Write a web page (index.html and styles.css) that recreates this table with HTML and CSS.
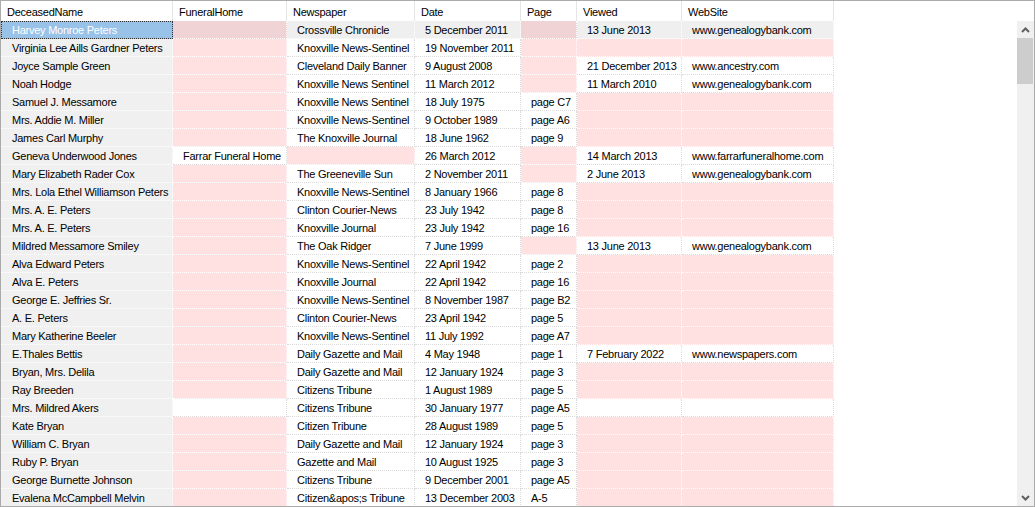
FILE: index.html
```html
<!DOCTYPE html>
<html>
<head>
<meta charset="utf-8">
<link rel="stylesheet" href="styles.css">
</head>
<body>
<div class="frame">
  <div class="head">
    <div class="hc">DeceasedName</div>
    <div class="hc">FuneralHome</div>
    <div class="hc">Newspaper</div>
    <div class="hc">Date</div>
    <div class="hc">Page</div>
    <div class="hc">Viewed</div>
    <div class="hc">WebSite</div>
    <div class="hfill"></div>
  </div>
  <div class="body">
    <div class="rows">
      <div class="row cur"><div class="c n sel">Harvey Monroe Peters</div><div class="c e"></div><div class="c w">Crossville Chronicle</div><div class="c w">5 December 2011</div><div class="c e"></div><div class="c w">13 June 2013</div><div class="c w">www.genealogybank.com</div></div>
      <div class="row"><div class="c n">Virginia Lee Aills Gardner Peters</div><div class="c e"></div><div class="c w">Knoxville News-Sentinel</div><div class="c w">19 November 2011</div><div class="c e"></div><div class="c e"></div><div class="c e"></div></div>
      <div class="row"><div class="c n">Joyce Sample Green</div><div class="c e"></div><div class="c w">Cleveland Daily Banner</div><div class="c w">9 August 2008</div><div class="c e"></div><div class="c w">21 December 2013</div><div class="c w">www.ancestry.com</div></div>
      <div class="row"><div class="c n">Noah Hodge</div><div class="c e"></div><div class="c w">Knoxville News Sentinel</div><div class="c w">11 March 2012</div><div class="c e"></div><div class="c w">11 March 2010</div><div class="c w">www.genealogybank.com</div></div>
      <div class="row"><div class="c n">Samuel J. Messamore</div><div class="c e"></div><div class="c w">Knoxville News Sentinel</div><div class="c w">18 July 1975</div><div class="c w">page C7</div><div class="c e"></div><div class="c e"></div></div>
      <div class="row"><div class="c n">Mrs. Addie M. Miller</div><div class="c e"></div><div class="c w">Knoxville News-Sentinel</div><div class="c w">9 October 1989</div><div class="c w">page A6</div><div class="c e"></div><div class="c e"></div></div>
      <div class="row"><div class="c n">James Carl Murphy</div><div class="c e"></div><div class="c w">The Knoxville Journal</div><div class="c w">18 June 1962</div><div class="c w">page 9</div><div class="c e"></div><div class="c e"></div></div>
      <div class="row"><div class="c n">Geneva Underwood Jones</div><div class="c w">Farrar Funeral Home</div><div class="c e"></div><div class="c w">26 March 2012</div><div class="c e"></div><div class="c w">14 March 2013</div><div class="c w">www.farrarfuneralhome.com</div></div>
      <div class="row"><div class="c n">Mary Elizabeth Rader Cox</div><div class="c e"></div><div class="c w">The Greeneville Sun</div><div class="c w">2 November 2011</div><div class="c e"></div><div class="c w">2 June 2013</div><div class="c w">www.genealogybank.com</div></div>
      <div class="row"><div class="c n">Mrs. Lola Ethel Williamson Peters</div><div class="c e"></div><div class="c w">Knoxville News-Sentinel</div><div class="c w">8 January 1966</div><div class="c w">page 8</div><div class="c e"></div><div class="c e"></div></div>
      <div class="row"><div class="c n">Mrs. A. E. Peters</div><div class="c e"></div><div class="c w">Clinton Courier-News</div><div class="c w">23 July 1942</div><div class="c w">page 8</div><div class="c e"></div><div class="c e"></div></div>
      <div class="row"><div class="c n">Mrs. A. E. Peters</div><div class="c e"></div><div class="c w">Knoxville Journal</div><div class="c w">23 July 1942</div><div class="c w">page 16</div><div class="c e"></div><div class="c e"></div></div>
      <div class="row"><div class="c n">Mildred Messamore Smiley</div><div class="c e"></div><div class="c w">The Oak Ridger</div><div class="c w">7 June 1999</div><div class="c e"></div><div class="c w">13 June 2013</div><div class="c w">www.genealogybank.com</div></div>
      <div class="row"><div class="c n">Alva Edward Peters</div><div class="c e"></div><div class="c w">Knoxville News-Sentinel</div><div class="c w">22 April 1942</div><div class="c w">page 2</div><div class="c e"></div><div class="c e"></div></div>
      <div class="row"><div class="c n">Alva E. Peters</div><div class="c e"></div><div class="c w">Knoxville Journal</div><div class="c w">22 April 1942</div><div class="c w">page 16</div><div class="c e"></div><div class="c e"></div></div>
      <div class="row"><div class="c n">George E. Jeffries Sr.</div><div class="c e"></div><div class="c w">Knoxville News-Sentinel</div><div class="c w">8 November 1987</div><div class="c w">page B2</div><div class="c e"></div><div class="c e"></div></div>
      <div class="row"><div class="c n">A. E. Peters</div><div class="c e"></div><div class="c w">Clinton Courier-News</div><div class="c w">23 April 1942</div><div class="c w">page 5</div><div class="c e"></div><div class="c e"></div></div>
      <div class="row"><div class="c n">Mary Katherine Beeler</div><div class="c e"></div><div class="c w">Knoxville News-Sentinel</div><div class="c w">11 July 1992</div><div class="c w">page A7</div><div class="c e"></div><div class="c e"></div></div>
      <div class="row"><div class="c n">E.Thales Bettis</div><div class="c e"></div><div class="c w">Daily Gazette and Mail</div><div class="c w">4 May 1948</div><div class="c w">page 1</div><div class="c w">7 February 2022</div><div class="c w">www.newspapers.com</div></div>
      <div class="row"><div class="c n">Bryan, Mrs. Delila</div><div class="c e"></div><div class="c w">Daily Gazette and Mail</div><div class="c w">12 January 1924</div><div class="c w">page 3</div><div class="c e"></div><div class="c e"></div></div>
      <div class="row"><div class="c n">Ray Breeden</div><div class="c e"></div><div class="c w">Citizens Tribune</div><div class="c w">1 August 1989</div><div class="c w">page 5</div><div class="c e"></div><div class="c e"></div></div>
      <div class="row"><div class="c n">Mrs. Mildred Akers</div><div class="c w"></div><div class="c w">Citizens Tribune</div><div class="c w">30 January 1977</div><div class="c w">page A5</div><div class="c w"></div><div class="c w"></div></div>
      <div class="row"><div class="c n">Kate Bryan</div><div class="c e"></div><div class="c w">Citizen Tribune</div><div class="c w">28 August 1989</div><div class="c w">page 5</div><div class="c e"></div><div class="c e"></div></div>
      <div class="row"><div class="c n">William C. Bryan</div><div class="c e"></div><div class="c w">Daily Gazette and Mail</div><div class="c w">12 January 1924</div><div class="c w">page 3</div><div class="c e"></div><div class="c e"></div></div>
      <div class="row"><div class="c n">Ruby P. Bryan</div><div class="c e"></div><div class="c w">Gazette and Mail</div><div class="c w">10 August 1925</div><div class="c w">page 3</div><div class="c e"></div><div class="c e"></div></div>
      <div class="row"><div class="c n">George Burnette Johnson</div><div class="c e"></div><div class="c w">Citizens Tribune</div><div class="c w">9 December 2001</div><div class="c w">page A5</div><div class="c e"></div><div class="c e"></div></div>
      <div class="row"><div class="c n">Evalena McCampbell Melvin</div><div class="c e"></div><div class="c w">Citizen&amp;apos;s Tribune</div><div class="c w">13 December 2003</div><div class="c w">A-5</div><div class="c e"></div><div class="c e"></div></div>
    </div>
    <div class="vscroll">
      <div class="sbtn">
        <svg width="9" height="6" viewBox="0 0 9 6"><path d="M1 5 L4.5 1.5 L8 5" fill="none" stroke="#606060" stroke-width="2"/></svg>
      </div>
      <div class="thumb"></div>
      <div class="track"></div>
      <div class="sbtn">
        <svg width="9" height="6" viewBox="0 0 9 6"><path d="M1 1 L4.5 4.5 L8 1" fill="none" stroke="#606060" stroke-width="2"/></svg>
      </div>
    </div>
  </div>
</div>
</body>
</html>
```
FILE: styles.css
```css
html, body {
  margin: 0;
  padding: 0;
  background: #ffffff;
}
body {
  width: 1035px;
  height: 507px;
  overflow: hidden;
  font-family: "Liberation Sans", Arial, sans-serif;
  font-size: 11px;
  letter-spacing: -0.25px;
  color: #000000;
}
.frame {
  box-sizing: border-box;
  width: 1035px;
  height: 507px;
  border: 1px solid #ababab;
  display: flex;
  flex-direction: column;
  overflow: hidden;
  background: #ffffff;
}
.head {
  display: flex;
  height: 20px;
  flex: none;
  background: #ffffff;
}
.hc {
  box-sizing: border-box;
  height: 20px;
  padding: 2px 0 0 6px;
  line-height: 18px;
  border-right: 1px solid #e5e5e5;
  white-space: nowrap;
  overflow: hidden;
  flex: none;
}
.hfill {
  flex: 1;
}
.hc:nth-child(1), .c:nth-child(1) { width: 172px; }
.hc:nth-child(2), .c:nth-child(2) { width: 114px; }
.hc:nth-child(3), .c:nth-child(3) { width: 128px; }
.hc:nth-child(4), .c:nth-child(4) { width: 106px; }
.hc:nth-child(5), .c:nth-child(5) { width: 56px; }
.hc:nth-child(6), .c:nth-child(6) { width: 105px; }
.hc:nth-child(7), .c:nth-child(7) { width: 152px; }
.body {
  flex: 1;
  display: flex;
  min-height: 0;
}
.rows {
  flex: 1;
  overflow: hidden;
}
.row {
  display: flex;
  height: 18px;
}
.c {
  box-sizing: border-box;
  flex: none;
  height: 18px;
  line-height: 17px;
  padding: 1px 0 0 10px;
  white-space: nowrap;
  overflow: hidden;
  border-right: 1px dotted #dcdcdc;
  border-bottom: 1px dotted #dcdcdc;
}
.c.w {
  background: #ffffff;
}
.c.e {
  background: #ffe1e1;
  border-color: #ffffff;
}
.c.n {
  background: #f0f0f0;
  padding-left: 11px;
  border-color: #ffffff;
}
.cur .c.w {
  background: #efefef;
  border-color: #ffffff;
}
.cur .c.e {
  background: #f0d3d5;
}
.c.sel {
  background: #99c2e8;
  color: #ffffff;
  outline: 1px dotted #303030;
  outline-offset: -1px;
}
.vscroll {
  width: 17px;
  flex: none;
  display: flex;
  flex-direction: column;
  background: #f0f0f0;
}
.sbtn {
  height: 17px;
  flex: none;
  display: flex;
  align-items: center;
  justify-content: center;
}
.thumb {
  height: 46px;
  flex: none;
  margin: 0 1px 0 0;
  background: #cdcdcd;
}
.track {
  flex: 1;
}
```
